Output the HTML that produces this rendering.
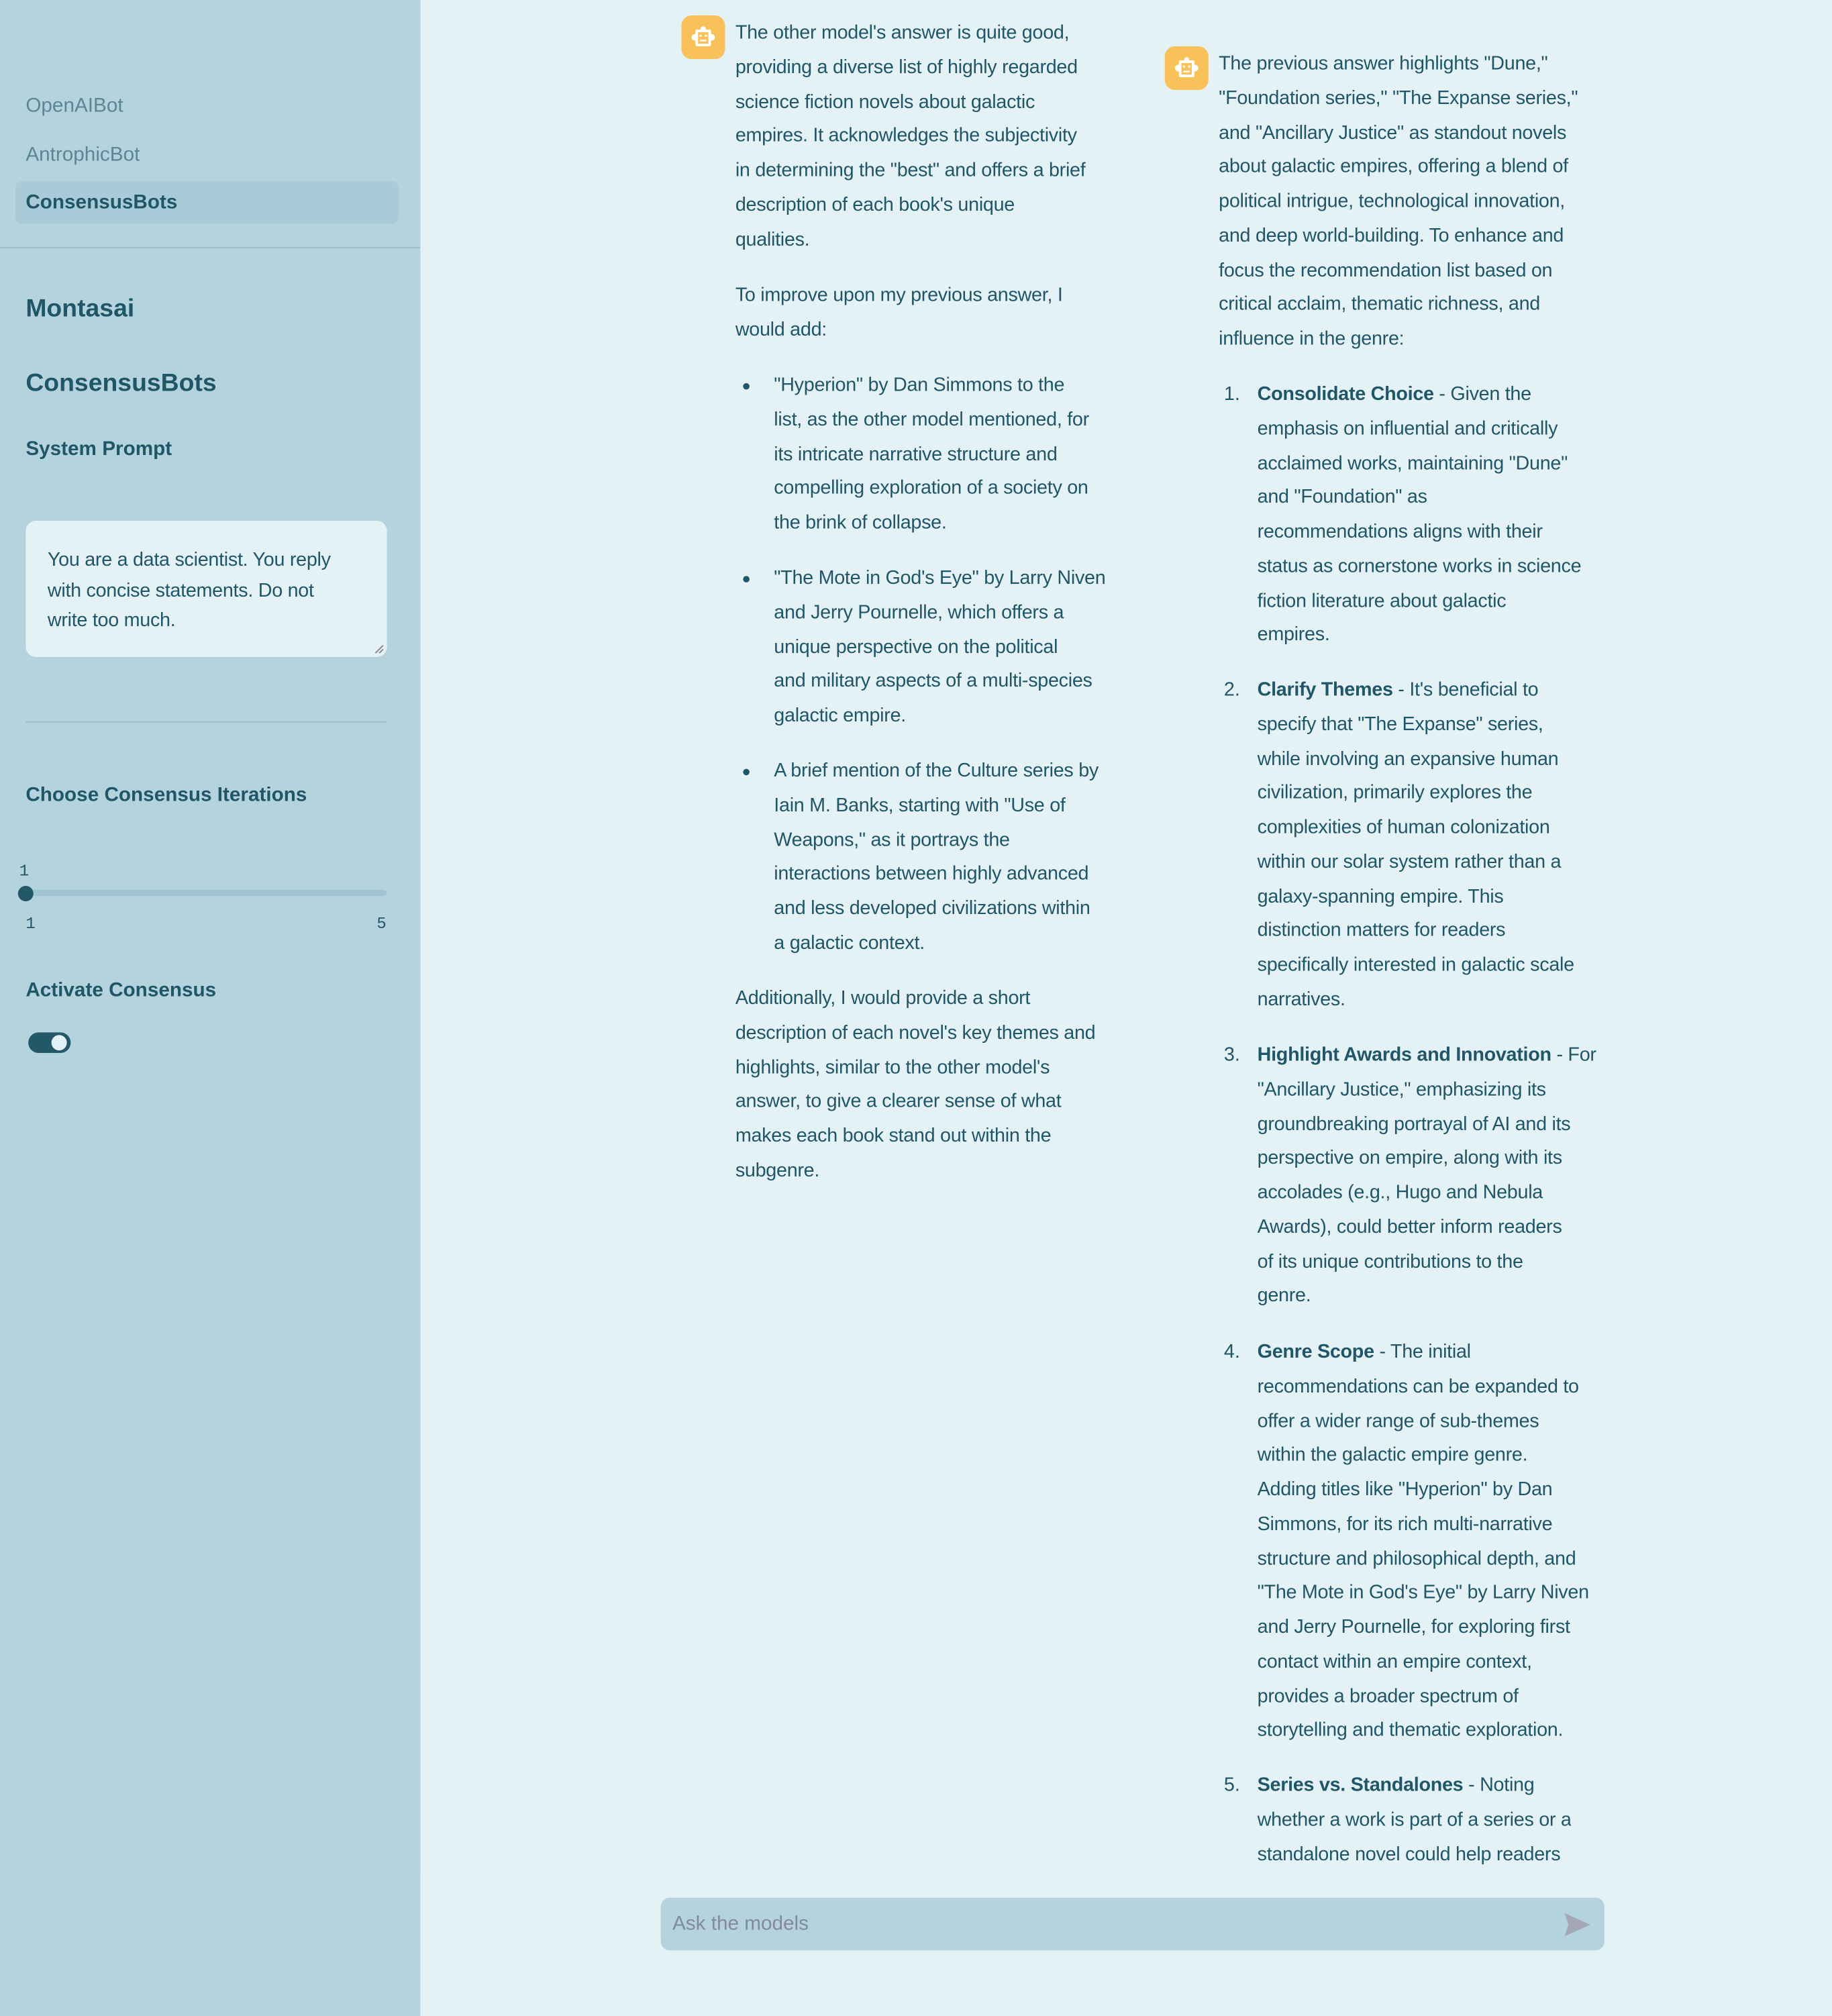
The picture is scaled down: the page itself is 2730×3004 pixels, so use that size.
<!DOCTYPE html>
<html><head><meta charset="utf-8"><style>
html,body{margin:0;padding:0;width:2730px;height:3004px;overflow:hidden;background:#e4f1f5}
#w{position:absolute;left:0;top:0;width:1425px;height:1568px;transform:scale(1.91579);transform-origin:0 0;font-family:"Liberation Sans",sans-serif;color:#1f5668}
#sb{position:absolute;left:0;top:0;width:327px;height:1568px;background:#b5d3dd}
.a{position:absolute;white-space:nowrap}
.blk{position:absolute;font-size:15px;line-height:26.75px;white-space:nowrap;letter-spacing:-0.15px}
.blk div{height:26.75px}
.dot{position:absolute;width:5px;height:5px;border-radius:50%;background:#1f5668}
.num{position:absolute;font-size:15px;line-height:26.75px}
b{font-weight:bold}
</style></head><body><div id="w">
<div id="sb">
<div class="a" style="left:20px;top:74px;font-size:15.5px;color:#5a8796">OpenAIBot</div>
<div class="a" style="left:20px;top:112px;font-size:15.5px;color:#5a8796">AntrophicBot</div>
<div class="a" style="left:12px;top:141px;width:298px;height:33px;background:#a9cbd8;border-radius:5px"></div>
<div class="a" style="left:20px;top:149px;font-size:15.5px;font-weight:bold">ConsensusBots</div>
<div class="a" style="left:0;top:192px;width:327px;height:1px;background:#98bccb"></div>
<div class="a" style="left:20px;top:229px;font-size:19.5px;font-weight:bold">Montasai</div>
<div class="a" style="left:20px;top:287px;font-size:19.5px;font-weight:bold">ConsensusBots</div>
<div class="a" style="left:20px;top:341px;font-size:15.5px;font-weight:bold">System Prompt</div>
<div class="a" style="left:20px;top:405px;width:281px;height:106px;background:#e4f1f5;border-radius:8px"></div>
<div class="a" style="left:37px;top:424px;font-size:15px;line-height:23.5px;letter-spacing:-0.15px">You are a data scientist. You reply<br>with concise statements. Do not<br>write too much.</div>
<svg class="a" style="left:291px;top:501px" width="8" height="8"><path d="M1 7L7 1M4 7L7 4" stroke="#888" stroke-width="1"/></svg>
<div class="a" style="left:20px;top:561px;width:281px;height:1px;background:#98bccb"></div>
<div class="a" style="left:20px;top:610px;font-size:15.5px;font-weight:bold">Choose Consensus Iterations</div>
<div class="a" style="left:15px;top:671px;font-size:12.5px;font-family:'Liberation Mono',monospace">1</div>
<div class="a" style="left:20px;top:692px;width:281px;height:5px;background:#9fc5d4;border-radius:3px"></div>
<div class="a" style="left:14px;top:689px;width:12px;height:12px;border-radius:50%;background:#225868"></div>
<div class="a" style="left:20px;top:712px;font-size:12.5px;font-family:'Liberation Mono',monospace">1</div>
<div class="a" style="left:293px;top:712px;font-size:12.5px;font-family:'Liberation Mono',monospace">5</div>
<div class="a" style="left:20px;top:762px;font-size:15.5px;font-weight:bold">Activate Consensus</div>
<div class="a" style="left:22px;top:803px;width:33px;height:16px;border-radius:8px;background:#225868"></div>
<div class="a" style="left:40px;top:805px;width:12px;height:12px;border-radius:50%;background:#e4f1f5"></div>
</div>

<svg class="a" style="left:530px;top:12px" width="34" height="34" viewBox="0 0 34 34"><rect width="34" height="34" rx="8" fill="#f8c15a"/><g fill="#fff"><circle cx="17" cy="10.5" r="2"/><circle cx="10.5" cy="17" r="2.6"/><circle cx="23.5" cy="17" r="2.6"/><rect x="11" y="11" width="12" height="13" rx="1"/></g><g fill="#f8c15a"><rect x="13" y="13" width="8" height="9"/></g><g fill="#fff"><rect x="14.2" y="15" width="1.6" height="1.6"/><rect x="18.2" y="15" width="1.6" height="1.6"/><rect x="14.5" y="19" width="5" height="1.2"/></g></svg>
<svg class="a" style="left:906px;top:36px" width="34" height="34" viewBox="0 0 34 34"><rect width="34" height="34" rx="8" fill="#f8c15a"/><g fill="#fff"><circle cx="17" cy="10.5" r="2"/><circle cx="10.5" cy="17" r="2.6"/><circle cx="23.5" cy="17" r="2.6"/><rect x="11" y="11" width="12" height="13" rx="1"/></g><g fill="#f8c15a"><rect x="13" y="13" width="8" height="9"/></g><g fill="#fff"><rect x="14.2" y="15" width="1.6" height="1.6"/><rect x="18.2" y="15" width="1.6" height="1.6"/><rect x="14.5" y="19" width="5" height="1.2"/></g></svg>

<div class="blk" style="left:572px;top:13px"><div>The other model's answer is quite good,</div><div>providing a diverse list of highly regarded</div><div>science fiction novels about galactic</div><div>empires. It acknowledges the subjectivity</div><div>in determining the "best" and offers a brief</div><div>description of each book's unique</div><div>qualities.</div></div>
<div class="blk" style="left:572px;top:217px"><div>To improve upon my previous answer, I</div><div>would add:</div></div>
<div class="dot" style="left:578px;top:298px"></div>
<div class="blk" style="left:602px;top:287px"><div>"Hyperion" by Dan Simmons to the</div><div>list, as the other model mentioned, for</div><div>its intricate narrative structure and</div><div>compelling exploration of a society on</div><div>the brink of collapse.</div></div>
<div class="dot" style="left:578px;top:448px"></div>
<div class="blk" style="left:602px;top:437px"><div>"The Mote in God's Eye" by Larry Niven</div><div>and Jerry Pournelle, which offers a</div><div>unique perspective on the political</div><div>and military aspects of a multi-species</div><div>galactic empire.</div></div>
<div class="dot" style="left:578px;top:598px"></div>
<div class="blk" style="left:602px;top:587px"><div>A brief mention of the Culture series by</div><div>Iain M. Banks, starting with "Use of</div><div>Weapons," as it portrays the</div><div>interactions between highly advanced</div><div>and less developed civilizations within</div><div>a galactic context.</div></div>
<div class="blk" style="left:572px;top:764px"><div>Additionally, I would provide a short</div><div>description of each novel's key themes and</div><div>highlights, similar to the other model's</div><div>answer, to give a clearer sense of what</div><div>makes each book stand out within the</div><div>subgenre.</div></div>

<div class="blk" style="left:948px;top:37px"><div>The previous answer highlights "Dune,"</div><div>"Foundation series," "The Expanse series,"</div><div>and "Ancillary Justice" as standout novels</div><div>about galactic empires, offering a blend of</div><div>political intrigue, technological innovation,</div><div>and deep world-building. To enhance and</div><div>focus the recommendation list based on</div><div>critical acclaim, thematic richness, and</div><div>influence in the genre:</div></div>
<div class="num" style="left:952px;top:294px">1.</div>
<div class="blk" style="left:978px;top:294px"><div><b>Consolidate Choice</b> - Given the</div><div>emphasis on influential and critically</div><div>acclaimed works, maintaining "Dune"</div><div>and "Foundation" as</div><div>recommendations aligns with their</div><div>status as cornerstone works in science</div><div>fiction literature about galactic</div><div>empires.</div></div>
<div class="num" style="left:952px;top:524px">2.</div>
<div class="blk" style="left:978px;top:524px"><div><b>Clarify Themes</b> - It's beneficial to</div><div>specify that "The Expanse" series,</div><div>while involving an expansive human</div><div>civilization, primarily explores the</div><div>complexities of human colonization</div><div>within our solar system rather than a</div><div>galaxy-spanning empire. This</div><div>distinction matters for readers</div><div>specifically interested in galactic scale</div><div>narratives.</div></div>
<div class="num" style="left:952px;top:808px">3.</div>
<div class="blk" style="left:978px;top:808px"><div><b>Highlight Awards and Innovation</b> - For</div><div>"Ancillary Justice," emphasizing its</div><div>groundbreaking portrayal of AI and its</div><div>perspective on empire, along with its</div><div>accolades (e.g., Hugo and Nebula</div><div>Awards), could better inform readers</div><div>of its unique contributions to the</div><div>genre.</div></div>
<div class="num" style="left:952px;top:1039px">4.</div>
<div class="blk" style="left:978px;top:1039px"><div><b>Genre Scope</b> - The initial</div><div>recommendations can be expanded to</div><div>offer a wider range of sub-themes</div><div>within the galactic empire genre.</div><div>Adding titles like "Hyperion" by Dan</div><div>Simmons, for its rich multi-narrative</div><div>structure and philosophical depth, and</div><div>"The Mote in God's Eye" by Larry Niven</div><div>and Jerry Pournelle, for exploring first</div><div>contact within an empire context,</div><div>provides a broader spectrum of</div><div>storytelling and thematic exploration.</div></div>
<div class="num" style="left:952px;top:1376px">5.</div>
<div class="blk" style="left:978px;top:1376px;height:80px;overflow:hidden"><div><b>Series vs. Standalones</b> - Noting</div><div>whether a work is part of a series or a</div><div>standalone novel could help readers</div></div>
<div class="a" style="left:327px;top:1456px;width:1098px;height:112px;background:#e4f1f5"></div>
<div class="a" style="left:514px;top:1476px;width:734px;height:41px;background:#b5d3dd;border-radius:7px"></div>
<div class="a" style="left:523px;top:1488px;font-size:15.5px;color:#838a9a">Ask the models</div>
<svg class="a" style="left:1216px;top:1487px" width="22" height="20" viewBox="0 0 22 20"><path d="M1 1L21 10L1 19L4 10Z" fill="#a3a7b8"/></svg>
</div></body></html>
